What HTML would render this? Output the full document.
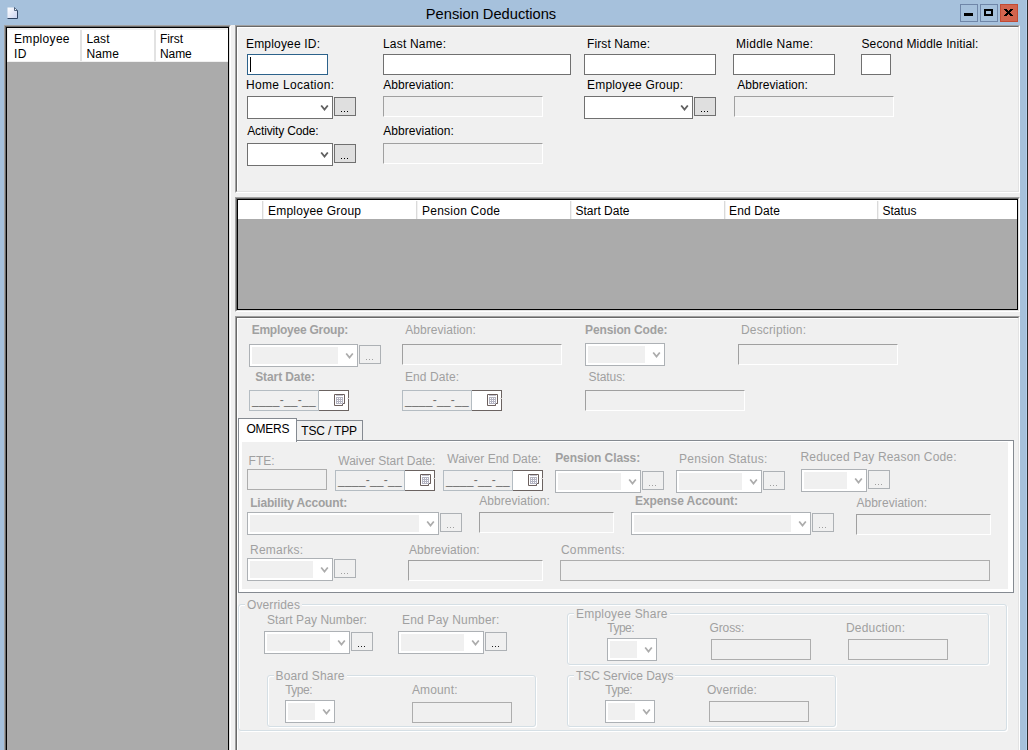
<!DOCTYPE html>
<html><head><meta charset="utf-8"><title>Pension Deductions</title>
<style>
html,body{margin:0;padding:0}
body{width:1028px;height:750px;overflow:hidden;position:relative;background:#a6c1dc;font:12px/15px "Liberation Sans",sans-serif;color:#000}
body div,body span,body svg,body i,body b{position:absolute;box-sizing:border-box}
.title{left:0;top:4px;width:982px;text-align:center;font-size:14.67px;line-height:20px}
.l{white-space:nowrap}
.d{color:#a0a0a0}

.bd{font-weight:bold}
.gl{background:#f0f0f0;padding:0 2px}
.in{background:#fff;border:1px solid #707070}
.foc{background:#fff;border:1px solid #2c628b}
.ro{background:#f0f0f0;border:1px solid;border-color:#a0a0a0 #fff #fff #a0a0a0}
.fl{background:#f0f0f0;border:1px solid #adadad}
.sel{background:#fff;border:1px solid #707070}
.sel .cv{right:3px;top:8px;stroke:#606060;stroke-width:1.8}
.sel.dis{border-color:#adb1b5}
.sel.dis i{left:2px;top:2px;bottom:2px;right:19px;background:#f0f0f0}
.sel.dis .cv{stroke:#acacac;stroke-width:1.7}
.btn{background:#dfdfdf;border:1px solid #707070}
.btn b{width:1px;height:1px;background:#000;top:13px}
.btn b:nth-child(1){left:6px}.btn b:nth-child(2){left:9px}.btn b:nth-child(3){left:12px}
.btn.dis{background:#f0f0f0;border-color:#adb1b5}
.btn.dis b{background:#a0a0a0}
.btn.dis.dk b{background:#222}
.dt{width:100px;height:21px;background:#f0f0f0;border:1px solid #b4bcc2}
.dt .mk{left:2px;top:2px;color:#6d6d6d;white-space:nowrap;letter-spacing:0.25px}
.dt .db{left:69px;top:-1px;width:30px;height:21px;background:#fff;border:1px solid #6b6361;border-left:none}
.dt:before{content:"";position:absolute;left:68px;top:0;width:1px;height:19px;background:#b4bcc2}
.dt .cal{left:15px;top:3px}
.dt .db i{left:28px;top:7px;width:2px;height:1px;background:linear-gradient(90deg,#e8e6e6,#cfcaca)}
.gb{border:1px solid #d5dfe5;border-radius:3px;box-shadow:inset 1px 1px 0 #fff, 1px 1px 0 #fff}
</style></head><body>

<div class="title">Pension Deductions</div>
<svg style="left:7px;top:7px" width="12" height="13" viewBox="0 0 12 13"><defs><linearGradient id="g" x1="0" y1="0" x2="1" y2="1"><stop offset="0" stop-color="#fff"/><stop offset="1" stop-color="#c9d3f0"/></linearGradient></defs><path d="M0.5 0.5 H7 L10.5 3.5 V11.5 H0.5 Z" fill="url(#g)"/><path d="M7 0.5 L10.5 3.5 V11.5 H0.5" fill="none" stroke="#2f4563" stroke-width="1"/><path d="M7.5 1 V3.5 H10" fill="#fff" stroke="#2f4563" stroke-width="0.8"/></svg>
<div style="left:960px;top:4px;width:18px;height:18px;border:1px solid #6f86a8"><div style="left:3px;top:8px;width:9px;height:3px;background:#000"></div></div>
<div style="left:980px;top:4px;width:18px;height:18px;border:1px solid #6f86a8"><div style="left:3px;top:4px;width:9px;height:7px;border:2px solid #000"></div></div>
<div style="left:1000px;top:4px;width:18px;height:18px;background:#d2644e;border:1px solid #c24a33"><svg style="left:3px;top:4px" width="9" height="7" viewBox="0 0 9 7" shape-rendering="crispEdges" fill="#000"><rect x="0" y="0" width="3" height="1"/><rect x="6" y="0" width="3" height="1"/><rect x="1" y="1" width="3" height="1"/><rect x="5" y="1" width="3" height="1"/><rect x="2" y="2" width="5" height="1"/><rect x="3" y="3" width="3" height="1"/><rect x="2" y="4" width="5" height="1"/><rect x="1" y="5" width="3" height="1"/><rect x="5" y="5" width="3" height="1"/><rect x="0" y="6" width="3" height="1"/><rect x="6" y="6" width="3" height="1"/></svg></div>
<div style="left:1026px;top:0;width:1px;height:750px;background:#b2cdec"></div><div style="left:1027px;top:0;width:1px;height:750px;background:#2b2b2b"></div>
<div style="left:4px;top:25px;width:227px;height:740px;background:#ababab;border:1px solid;border-color:#a0a0a0 #fff #fff #a0a0a0"><div style="left:0;top:0;width:225px;height:738px;border:1px solid;border-color:#696969 #e3e3e3 #e3e3e3 #696969"><div style="left:0;top:0;width:223px;height:736px;border:1px solid #000"></div></div></div>
<div style="left:7px;top:28px;width:221px;height:34px;background:#fff;border:solid #f0f0f0;border-width:2px 0 1px 1px"></div>
<div style="left:80px;top:30px;width:2px;height:31px;background:#e2e2e2"></div>
<div style="left:154px;top:30px;width:2px;height:31px;background:#e2e2e2"></div>
<div class="l " style="left:14.02px;top:32px;letter-spacing:0.308px">Employee<br>ID</div>
<div class="l " style="left:86.52px;top:32px;letter-spacing:0.106px">Last<br>Name</div>
<div class="l " style="left:160.02px;top:32px;letter-spacing:-0.082px">First<br>Name</div>
<div style="left:231px;top:25px;width:4px;height:740px;background:#f0f0f0"></div>
<div style="left:235px;top:25px;width:785px;height:740px;background:#f0f0f0"></div>
<div style="left:235px;top:25px;width:785px;height:168px;background:#f0f0f0;border:1px solid;border-color:#a0a0a0 #fff #fff #a0a0a0"><div style="left:0;top:0;width:783px;height:166px;border:1px solid;border-color:#696969 #e3e3e3 #e3e3e3 #696969"><div style="left:0;top:0;width:781px;height:164px;border:1px solid;border-color:#fff #f0f0f0 #f0f0f0 #fff"></div></div></div>
<div style="left:235px;top:197px;width:785px;height:115px;background:#f0f0f0;border:1px solid;border-color:#a0a0a0 #fff #fff #a0a0a0"><div style="left:0;top:0;width:783px;height:113px;border:1px solid;border-color:#696969 #e3e3e3 #e3e3e3 #696969"><div style="left:0;top:0;width:781px;height:111px;border:1px solid #000;background:#ababab"></div></div></div>
<div style="left:235px;top:316px;width:785px;height:460px;background:#f0f0f0;border:1px solid;border-color:#a0a0a0 #fff #fff #a0a0a0"><div style="left:0;top:0;width:783px;height:458px;border:1px solid;border-color:#696969 #e3e3e3 #e3e3e3 #696969"><div style="left:0;top:0;width:781px;height:456px;border:1px solid;border-color:#fff #f0f0f0 #f0f0f0 #fff"></div></div></div>
<div class="l " style="left:246.02px;top:37px;letter-spacing:0.179px">Employee ID:</div>
<div class="l " style="left:383.02px;top:37px;letter-spacing:0.182px">Last Name:</div>
<div class="l " style="left:587.02px;top:37px;letter-spacing:0.100px">First Name:</div>
<div class="l " style="left:736.02px;top:37px;letter-spacing:0.270px">Middle Name:</div>
<div class="l " style="left:861.46px;top:37px;letter-spacing:0.140px">Second Middle Initial:</div>
<div class="foc" style="left:247px;top:54px;width:81px;height:21px"></div>
<div style="left:250px;top:57px;width:1px;height:15px;background:#000"></div>
<div class="in" style="left:383px;top:54px;width:188px;height:21px"></div>
<div class="in" style="left:584px;top:54px;width:132px;height:21px"></div>
<div class="in" style="left:733px;top:54px;width:102px;height:21px"></div>
<div class="in" style="left:861px;top:54px;width:30px;height:21px"></div>
<div class="l " style="left:246.02px;top:78px;letter-spacing:0.310px">Home Location:</div>
<div class="l " style="left:383.28px;top:78px;letter-spacing:0.048px">Abbreviation:</div>
<div class="l " style="left:587.02px;top:78px;letter-spacing:0.187px">Employee Group:</div>
<div class="l " style="left:737.28px;top:78px;letter-spacing:0.048px">Abbreviation:</div>
<div class="sel" style="left:247px;top:96px;width:86px;height:23px"><svg class="cv" width="9" height="7" viewBox="0 0 9 7"><path d="M1.2 0.5 L4.5 4.6 L7.8 0.5" fill="none"/></svg></div>
<div class="btn" style="left:334px;top:97px;width:22px;height:19px"><b></b><b></b><b></b></div>
<div class="ro" style="left:383px;top:96px;width:160px;height:21px"></div>
<div class="sel" style="left:584px;top:96px;width:109px;height:23px"><svg class="cv" width="9" height="7" viewBox="0 0 9 7"><path d="M1.2 0.5 L4.5 4.6 L7.8 0.5" fill="none"/></svg></div>
<div class="btn" style="left:694px;top:97px;width:22px;height:19px"><b></b><b></b><b></b></div>
<div class="ro" style="left:734px;top:96px;width:160px;height:21px"></div>
<div class="l " style="left:247.28px;top:124px;letter-spacing:-0.157px">Activity Code:</div>
<div class="l " style="left:383.28px;top:124px;letter-spacing:0.048px">Abbreviation:</div>
<div class="sel" style="left:247px;top:143px;width:86px;height:23px"><svg class="cv" width="9" height="7" viewBox="0 0 9 7"><path d="M1.2 0.5 L4.5 4.6 L7.8 0.5" fill="none"/></svg></div>
<div class="btn" style="left:334px;top:144px;width:22px;height:19px"><b></b><b></b><b></b></div>
<div class="ro" style="left:383px;top:143px;width:160px;height:21px"></div>
<div style="left:238px;top:200px;width:779px;height:19px;background:#fff"></div>
<div style="left:262px;top:201px;width:2px;height:18px;background:linear-gradient(90deg,#dadada 50%,#f2f2f2 50%)"></div>
<div style="left:416px;top:201px;width:2px;height:18px;background:linear-gradient(90deg,#dadada 50%,#f2f2f2 50%)"></div>
<div style="left:570px;top:201px;width:2px;height:18px;background:linear-gradient(90deg,#dadada 50%,#f2f2f2 50%)"></div>
<div style="left:724px;top:201px;width:2px;height:18px;background:linear-gradient(90deg,#dadada 50%,#f2f2f2 50%)"></div>
<div style="left:877px;top:201px;width:2px;height:18px;background:linear-gradient(90deg,#dadada 50%,#f2f2f2 50%)"></div>
<div class="l " style="left:268.02px;top:204px;letter-spacing:0.227px">Employee Group</div>
<div class="l " style="left:422.02px;top:204px;letter-spacing:0.238px">Pension Code</div>
<div class="l " style="left:575.46px;top:204px;letter-spacing:-0.003px">Start Date</div>
<div class="l " style="left:729.02px;top:204px;letter-spacing:0.138px">End Date</div>
<div class="l " style="left:882.46px;top:204px;letter-spacing:-0.004px">Status</div>
<div class="l d bd" style="left:251.70px;top:323px;letter-spacing:-0.247px">Employee Group:</div>
<div class="l d" style="left:405.28px;top:323px;letter-spacing:0.048px">Abbreviation:</div>
<div class="l d bd" style="left:585.00px;top:323px;letter-spacing:-0.121px">Pension Code:</div>
<div class="l d" style="left:741.02px;top:323px;letter-spacing:0.149px">Description:</div>
<div class="sel dis" style="left:249px;top:344px;width:109px;height:23px"><i></i><svg class="cv" width="9" height="7" viewBox="0 0 9 7"><path d="M1.2 0.5 L4.5 4.6 L7.8 0.5" fill="none"/></svg></div>
<div class="btn dis" style="left:359px;top:345px;width:22px;height:19px"><b></b><b></b><b></b></div>
<div class="ro" style="left:402px;top:344px;width:160px;height:21px"></div>
<div class="sel dis" style="left:585px;top:343px;width:80px;height:23px"><i></i><svg class="cv" width="9" height="7" viewBox="0 0 9 7"><path d="M1.2 0.5 L4.5 4.6 L7.8 0.5" fill="none"/></svg></div>
<div class="ro" style="left:738px;top:344px;width:160px;height:21px"></div>
<div class="l d bd" style="left:255.15px;top:370px;letter-spacing:-0.088px">Start Date:</div>
<div class="l d" style="left:405.02px;top:370px;letter-spacing:0.079px">End Date:</div>
<div class="l d" style="left:588.46px;top:370px;letter-spacing:-0.059px">Status:</div>
<div class="dt" style="left:249px;top:390px"><span class="mk">____-__-__</span><div class="db"><svg class="cal" width="11" height="12" viewBox="0 0 11 12"><path d="M0.5 0.5 H10.5 V9.5 H8.5 V11.5 H0.5 Z" fill="#fff" stroke="#6b5f5d"/><path d="M8.5 9.5 V11.5 M8.5 9.5 H10.5" stroke="#6b5f5d" fill="none"/><rect x="2" y="1" width="7" height="1" fill="#c3c3cf"/><rect x="2" y="3" width="7" height="7" fill="#b4b4c2"/><g fill="#fff"><rect x="3" y="4" width="1" height="1"/><rect x="5" y="4" width="1" height="1"/><rect x="7" y="4" width="1" height="1"/><rect x="3" y="6" width="1" height="1"/><rect x="5" y="6" width="1" height="1"/><rect x="7" y="6" width="1" height="1"/><rect x="3" y="8" width="1" height="1"/><rect x="5" y="8" width="1" height="1"/><rect x="7" y="8" width="1" height="1"/></g></svg><i></i></div></div>
<div class="dt" style="left:402px;top:390px"><span class="mk">____-__-__</span><div class="db"><svg class="cal" width="11" height="12" viewBox="0 0 11 12"><path d="M0.5 0.5 H10.5 V9.5 H8.5 V11.5 H0.5 Z" fill="#fff" stroke="#6b5f5d"/><path d="M8.5 9.5 V11.5 M8.5 9.5 H10.5" stroke="#6b5f5d" fill="none"/><rect x="2" y="1" width="7" height="1" fill="#c3c3cf"/><rect x="2" y="3" width="7" height="7" fill="#b4b4c2"/><g fill="#fff"><rect x="3" y="4" width="1" height="1"/><rect x="5" y="4" width="1" height="1"/><rect x="7" y="4" width="1" height="1"/><rect x="3" y="6" width="1" height="1"/><rect x="5" y="6" width="1" height="1"/><rect x="7" y="6" width="1" height="1"/><rect x="3" y="8" width="1" height="1"/><rect x="5" y="8" width="1" height="1"/><rect x="7" y="8" width="1" height="1"/></g></svg><i></i></div></div>
<div class="ro" style="left:585px;top:390px;width:160px;height:21px"></div>
<div style="left:238px;top:440px;width:776px;height:153px;background:#fff;border:1px solid #858a91"></div>
<div style="left:242px;top:442px;width:766px;height:147px;background:#f0f0f0"></div>
<div style="left:296px;top:420px;width:67px;height:21px;background:#f0f0f0;border:1px solid #858a91"></div>
<div style="left:238px;top:418px;width:59px;height:24px;background:#fff;border:1px solid #858a91;border-bottom:none"></div>
<div class="l ns" style="left:246.43px;top:422px;letter-spacing:-0.221px">OMERS</div>
<div class="l ns" style="left:301.23px;top:424px;letter-spacing:-0.155px">TSC / TPP</div>
<div class="l d ns" style="left:248.52px;top:454px;letter-spacing:0.061px">FTE:</div>
<div class="l d" style="left:338.35px;top:454px;letter-spacing:-0.037px">Waiver Start Date:</div>
<div class="l d" style="left:447.25px;top:452px;letter-spacing:0.024px">Waiver End Date:</div>
<div class="l d bd" style="left:555.20px;top:451px;letter-spacing:-0.082px">Pension Class:</div>
<div class="l d" style="left:679.02px;top:452px;letter-spacing:0.306px">Pension Status:</div>
<div class="l d" style="left:800.52px;top:450px;letter-spacing:0.170px">Reduced Pay Reason Code:</div>
<div class="fl" style="left:247px;top:469px;width:80px;height:21px"></div>
<div class="dt" style="left:335px;top:470px"><span class="mk">____-__-__</span><div class="db"><svg class="cal" width="11" height="12" viewBox="0 0 11 12"><path d="M0.5 0.5 H10.5 V9.5 H8.5 V11.5 H0.5 Z" fill="#fff" stroke="#6b5f5d"/><path d="M8.5 9.5 V11.5 M8.5 9.5 H10.5" stroke="#6b5f5d" fill="none"/><rect x="2" y="1" width="7" height="1" fill="#c3c3cf"/><rect x="2" y="3" width="7" height="7" fill="#b4b4c2"/><g fill="#fff"><rect x="3" y="4" width="1" height="1"/><rect x="5" y="4" width="1" height="1"/><rect x="7" y="4" width="1" height="1"/><rect x="3" y="6" width="1" height="1"/><rect x="5" y="6" width="1" height="1"/><rect x="7" y="6" width="1" height="1"/><rect x="3" y="8" width="1" height="1"/><rect x="5" y="8" width="1" height="1"/><rect x="7" y="8" width="1" height="1"/></g></svg><i></i></div></div>
<div class="dt" style="left:443px;top:470px"><span class="mk">____-__-__</span><div class="db"><svg class="cal" width="11" height="12" viewBox="0 0 11 12"><path d="M0.5 0.5 H10.5 V9.5 H8.5 V11.5 H0.5 Z" fill="#fff" stroke="#6b5f5d"/><path d="M8.5 9.5 V11.5 M8.5 9.5 H10.5" stroke="#6b5f5d" fill="none"/><rect x="2" y="1" width="7" height="1" fill="#c3c3cf"/><rect x="2" y="3" width="7" height="7" fill="#b4b4c2"/><g fill="#fff"><rect x="3" y="4" width="1" height="1"/><rect x="5" y="4" width="1" height="1"/><rect x="7" y="4" width="1" height="1"/><rect x="3" y="6" width="1" height="1"/><rect x="5" y="6" width="1" height="1"/><rect x="7" y="6" width="1" height="1"/><rect x="3" y="8" width="1" height="1"/><rect x="5" y="8" width="1" height="1"/><rect x="7" y="8" width="1" height="1"/></g></svg><i></i></div></div>
<div class="sel dis" style="left:555px;top:470px;width:86px;height:23px"><i></i><svg class="cv" width="9" height="7" viewBox="0 0 9 7"><path d="M1.2 0.5 L4.5 4.6 L7.8 0.5" fill="none"/></svg></div>
<div class="btn dis" style="left:642px;top:471px;width:22px;height:19px"><b></b><b></b><b></b></div>
<div class="sel dis" style="left:676px;top:470px;width:86px;height:23px"><i></i><svg class="cv" width="9" height="7" viewBox="0 0 9 7"><path d="M1.2 0.5 L4.5 4.6 L7.8 0.5" fill="none"/></svg></div>
<div class="btn dis" style="left:763px;top:471px;width:22px;height:19px"><b></b><b></b><b></b></div>
<div class="sel dis" style="left:801px;top:469px;width:66px;height:23px"><i></i><svg class="cv" width="9" height="7" viewBox="0 0 9 7"><path d="M1.2 0.5 L4.5 4.6 L7.8 0.5" fill="none"/></svg></div>
<div class="btn dis" style="left:868px;top:470px;width:22px;height:19px"><b></b><b></b><b></b></div>
<div class="l d bd" style="left:250.20px;top:496px;letter-spacing:-0.189px">Liability Account:</div>
<div class="l d" style="left:479.18px;top:494px;letter-spacing:0.048px">Abbreviation:</div>
<div class="l d bd" style="left:635.00px;top:494px;letter-spacing:-0.082px">Expense Account:</div>
<div class="l d" style="left:856.38px;top:496px;letter-spacing:0.048px">Abbreviation:</div>
<div class="sel dis" style="left:247px;top:512px;width:192px;height:23px"><i></i><svg class="cv" width="9" height="7" viewBox="0 0 9 7"><path d="M1.2 0.5 L4.5 4.6 L7.8 0.5" fill="none"/></svg></div>
<div class="btn dis" style="left:440px;top:513px;width:22px;height:19px"><b></b><b></b><b></b></div>
<div class="ro" style="left:479px;top:512px;width:135px;height:21px"></div>
<div class="sel dis" style="left:631px;top:512px;width:180px;height:23px"><i></i><svg class="cv" width="9" height="7" viewBox="0 0 9 7"><path d="M1.2 0.5 L4.5 4.6 L7.8 0.5" fill="none"/></svg></div>
<div class="btn dis" style="left:812px;top:513px;width:22px;height:19px"><b></b><b></b><b></b></div>
<div class="ro" style="left:856px;top:514px;width:135px;height:21px"></div>
<div class="l d" style="left:250.02px;top:543px;letter-spacing:0.237px">Remarks:</div>
<div class="l d" style="left:408.98px;top:543px;letter-spacing:0.048px">Abbreviation:</div>
<div class="l d" style="left:560.89px;top:543px;letter-spacing:0.332px">Comments:</div>
<div class="sel dis" style="left:247px;top:558px;width:86px;height:23px"><i></i><svg class="cv" width="9" height="7" viewBox="0 0 9 7"><path d="M1.2 0.5 L4.5 4.6 L7.8 0.5" fill="none"/></svg></div>
<div class="btn dis" style="left:334px;top:559px;width:22px;height:19px"><b></b><b></b><b></b></div>
<div class="ro" style="left:408px;top:560px;width:135px;height:21px"></div>
<div class="fl" style="left:560px;top:560px;width:430px;height:21px"></div>
<div class="gb" style="left:238px;top:604px;width:769px;height:127px"></div>
<div class="l d gl" style="left:244.93px;top:598px;letter-spacing:0.123px">Overrides</div>
<div class="l d" style="left:266.96px;top:613px;letter-spacing:0.074px">Start Pay Number:</div>
<div class="l d" style="left:402.02px;top:613px;letter-spacing:0.184px">End Pay Number:</div>
<div class="sel dis" style="left:264px;top:631px;width:86px;height:23px"><i></i><svg class="cv" width="9" height="7" viewBox="0 0 9 7"><path d="M1.2 0.5 L4.5 4.6 L7.8 0.5" fill="none"/></svg></div>
<div class="btn dis dk" style="left:351px;top:632px;width:22px;height:19px"><b></b><b></b><b></b></div>
<div class="sel dis" style="left:398px;top:631px;width:86px;height:23px"><i></i><svg class="cv" width="9" height="7" viewBox="0 0 9 7"><path d="M1.2 0.5 L4.5 4.6 L7.8 0.5" fill="none"/></svg></div>
<div class="btn dis dk" style="left:485px;top:632px;width:22px;height:19px"><b></b><b></b><b></b></div>
<div class="gb" style="left:567px;top:613px;width:422px;height:52px"></div>
<div class="l d gl" style="left:574.02px;top:607px;letter-spacing:0.215px">Employee Share</div>
<div class="l d" style="left:607.23px;top:621px;letter-spacing:-0.487px">Type:</div>
<div class="l d" style="left:709.40px;top:621px;letter-spacing:-0.068px">Gross:</div>
<div class="l d" style="left:846.02px;top:621px;letter-spacing:0.181px">Deduction:</div>
<div class="sel dis" style="left:607px;top:638px;width:50px;height:23px"><i></i><svg class="cv" width="9" height="7" viewBox="0 0 9 7"><path d="M1.2 0.5 L4.5 4.6 L7.8 0.5" fill="none"/></svg></div>
<div class="fl" style="left:711px;top:639px;width:100px;height:21px"></div>
<div class="fl" style="left:848px;top:639px;width:100px;height:21px"></div>
<div class="gb" style="left:267px;top:675px;width:269px;height:52px"></div>
<div class="l d gl" style="left:273.52px;top:669px;letter-spacing:0.162px">Board Share</div>
<div class="l d" style="left:285.13px;top:683px;letter-spacing:-0.487px">Type:</div>
<div class="l d" style="left:411.98px;top:683px;letter-spacing:0.138px">Amount:</div>
<div class="sel dis" style="left:285px;top:700px;width:50px;height:23px"><i></i><svg class="cv" width="9" height="7" viewBox="0 0 9 7"><path d="M1.2 0.5 L4.5 4.6 L7.8 0.5" fill="none"/></svg></div>
<div class="fl" style="left:412px;top:702px;width:100px;height:21px"></div>
<div class="gb" style="left:567px;top:675px;width:269px;height:52px"></div>
<div class="l d gl" style="left:573.93px;top:669px;letter-spacing:-0.035px">TSC Service Days</div>
<div class="l d" style="left:605.23px;top:683px;letter-spacing:-0.487px">Type:</div>
<div class="l d" style="left:706.93px;top:683px;letter-spacing:0.082px">Override:</div>
<div class="sel dis" style="left:605px;top:700px;width:50px;height:23px"><i></i><svg class="cv" width="9" height="7" viewBox="0 0 9 7"><path d="M1.2 0.5 L4.5 4.6 L7.8 0.5" fill="none"/></svg></div>
<div class="fl" style="left:709px;top:701px;width:100px;height:21px"></div>
</body></html>
